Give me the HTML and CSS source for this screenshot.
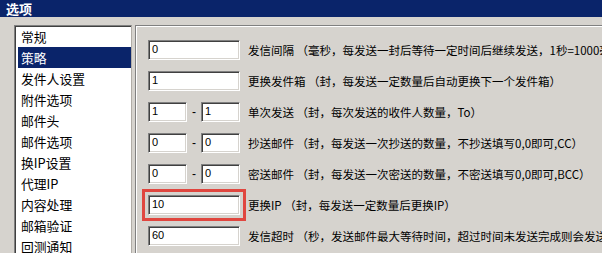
FILE: index.html
```html
<!DOCTYPE html>
<html lang="zh-CN">
<head>
<meta charset="utf-8">
<title>选项</title>
<link rel="stylesheet" href="styles.css">
</head>
<body>
<div class="window">
  <div class="titlebar">选项</div>
  <div class="content">
    <ul class="list">
      <li class="item">常规</li>
      <li class="item selected">策略</li>
      <li class="item">发件人设置</li>
      <li class="item">附件选项</li>
      <li class="item">邮件头</li>
      <li class="item">邮件选项</li>
      <li class="item">换IP设置</li>
      <li class="item">代理IP</li>
      <li class="item">内容处理</li>
      <li class="item">邮箱验证</li>
      <li class="item">回测通知</li>
    </ul>
    <div class="panel">
      <div class="row">
        <div class="field wide">0</div>
        <span class="label">发信间隔 （毫秒，每发送一封后等待一定时间后继续发送，1秒=1000毫秒）</span>
      </div>
      <div class="row">
        <div class="field wide">1</div>
        <span class="label">更换发件箱 （封，每发送一定数量后自动更换下一个发件箱）</span>
      </div>
      <div class="row">
        <div class="pair">
          <div class="field narrow">1</div>
          <span class="dash">-</span>
          <div class="field narrow">1</div>
        </div>
        <span class="label">单次发送 （封，每次发送的收件人数量，To）</span>
      </div>
      <div class="row">
        <div class="pair">
          <div class="field narrow">0</div>
          <span class="dash">-</span>
          <div class="field narrow">0</div>
        </div>
        <span class="label">抄送邮件 （封，每发送一次抄送的数量，不抄送填写0,0即可,CC）</span>
      </div>
      <div class="row">
        <div class="pair">
          <div class="field narrow">0</div>
          <span class="dash">-</span>
          <div class="field narrow">0</div>
        </div>
        <span class="label">密送邮件 （封，每发送一次密送的数量，不密送填写0,0即可,BCC）</span>
      </div>
      <div class="row">
        <div class="field wide marked">10</div>
        <span class="label">更换IP （封，每发送一定数量后更换IP）</span>
      </div>
      <div class="row">
        <div class="field wide">60</div>
        <span class="label">发信超时 （秒，发送邮件最大等待时间，超过时间未发送完成则会发送失败）</span>
      </div>
    </div>
  </div>
</div>
</body>
</html>
```
FILE: styles.css
```css
html, body {
  margin: 0;
  padding: 0;
  background: #ffffff;
}
.window {
  width: 602px;
  height: 253px;
  background: #d6d3ce;
  overflow: hidden;
  display: flex;
  flex-direction: column;
  font-family: "Noto Sans CJK SC", "Liberation Sans", sans-serif;
  font-size: 12px;
  color: #000;
}
.titlebar {
  height: 17px;
  flex: none;
  background: #0a246a;
  color: #ffffff;
  font-weight: bold;
  font-size: 13px;
  line-height: 17px;
  padding-left: 6px;
}
.content {
  flex: 1;
  display: flex;
  padding: 8px 0 0 14px;
  min-height: 0;
}
.list {
  list-style: none;
  margin: 0;
  padding: 0;
  width: 116px;
  flex: none;
  background: #ffffff;
  border-left: 1px solid #808080;
  border-top: 1px solid #808080;
  border-right: 1px solid #b0aca6;
  box-shadow: inset 1px 1px 0 #404040;
}
.item {
  height: 21px;
  line-height: 21px;
  margin-left: 3px;
  padding-left: 3px;
  font-size: 12.8px;
  white-space: nowrap;
}
.item.selected {
  background: #0a246a;
  color: #ffffff;
}
.panel {
  flex: 1;
  margin-left: 3px;
  border-left: 1px solid #808080;
  border-top: 1px solid #808080;
  box-shadow: inset 1px 1px 0 #ffffff;
  padding: 14px 0 0 12px;
  display: flex;
  flex-direction: column;
  gap: 11px;
  overflow: hidden;
  min-width: 0;
}
.row {
  display: flex;
  align-items: center;
  height: 20px;
  gap: 8px;
  white-space: nowrap;
}
.field {
  box-sizing: border-box;
  height: 20px;
  background: #ffffff;
  border-top: 1px solid #808080;
  border-left: 1px solid #808080;
  border-right: 1px solid #ffffff;
  border-bottom: 1px solid #ffffff;
  box-shadow: inset 1px 1px 0 #404040, inset -1px -1px 0 #d6d3ce;
  font-family: "Liberation Sans", "DejaVu Sans", sans-serif;
  font-size: 11px;
  line-height: 17px;
  padding-left: 3px;
  flex: none;
}
.wide {
  width: 92px;
}
.narrow {
  width: 39px;
}
.pair {
  display: flex;
  align-items: center;
  width: 92px;
  flex: none;
}
.dash {
  width: 14px;
  text-align: center;
  font-family: "Liberation Sans", sans-serif;
  font-size: 12px;
}
.marked {
  outline: 3px solid #e0463f;
  outline-offset: 3px;
}
.label {
  font-size: 11.5px;
  line-height: 20px;
}
```
